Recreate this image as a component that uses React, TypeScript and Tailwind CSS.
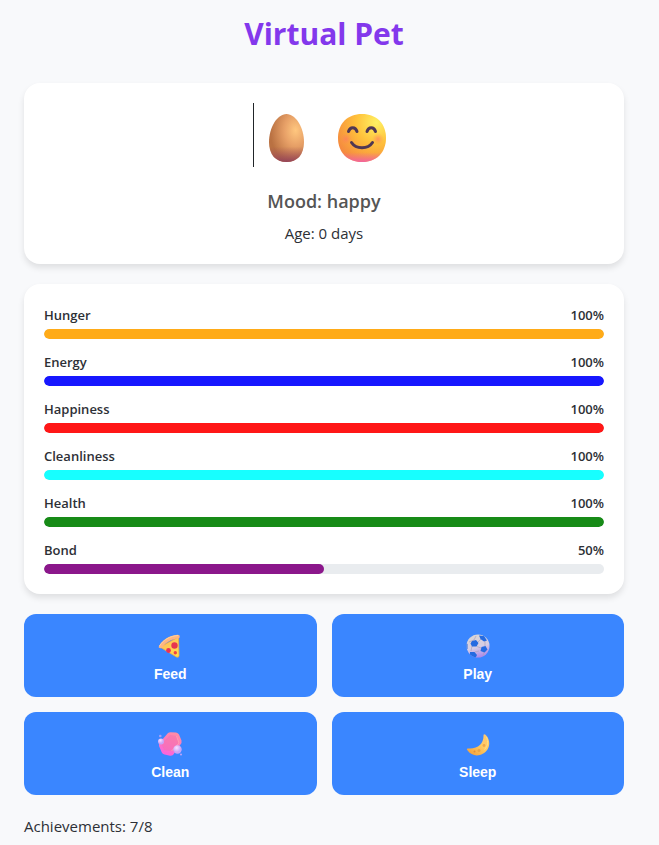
import type { ReactNode } from 'react';

const stats = [
  { name: 'Hunger', value: 100, color: 'bg-[#ffab18]' },
  { name: 'Energy', value: 100, color: 'bg-[#1717ff]' },
  { name: 'Happiness', value: 100, color: 'bg-[#ff1717]' },
  { name: 'Cleanliness', value: 100, color: 'bg-[#17ffff]' },
  { name: 'Health', value: 100, color: 'bg-[#178b17]' },
  { name: 'Bond', value: 50, color: 'bg-[#8b178b]' },
];

function Egg() {
  return (
    <svg viewBox="0 0 36 48" className="h-12 w-9" aria-label="Egg" role="img">
      <defs>
        <radialGradient id="eggBase" cx="0.76" cy="0.34" r="0.72">
          <stop offset="0" stopColor="#ffc77f" />
          <stop offset="0.45" stopColor="#e7a067" />
          <stop offset="1" stopColor="#b97142" />
        </radialGradient>
        <linearGradient id="eggShade" x1="0" y1="0" x2="0" y2="1">
          <stop offset="0.68" stopColor="#a24c55" stopOpacity="0" />
          <stop offset="1" stopColor="#91405c" stopOpacity="0.9" />
        </linearGradient>
      </defs>
      <path d="M17.500 0C27 0 35 14 35 28C35 41 28 48 17.500 48S0 41 0 28C0 14 8 0 17.500 0Z" fill="url(#eggBase)" />
      <path d="M17.500 0C27 0 35 14 35 28C35 41 28 48 17.500 48S0 41 0 28C0 14 8 0 17.500 0Z" fill="url(#eggShade)" />
    </svg>
  );
}

function Smile() {
  return (
    <svg viewBox="0 0 48 48" className="size-12" aria-label="Happy face" role="img">
      <defs>
        <radialGradient id="faceBase" cx="0.8" cy="0.18" r="0.95">
          <stop offset="0" stopColor="#fff163" />
          <stop offset="0.45" stopColor="#ffc13b" />
          <stop offset="1" stopColor="#f4863f" />
        </radialGradient>
        <linearGradient id="faceShade" x1="0" y1="0" x2="0" y2="1">
          <stop offset="0.8" stopColor="#f263a0" stopOpacity="0" />
          <stop offset="1" stopColor="#f260a8" stopOpacity="0.9" />
        </linearGradient>
        <radialGradient id="cheek">
          <stop offset="0" stopColor="#ff7369" stopOpacity="0.6" />
          <stop offset="1" stopColor="#ff8a55" stopOpacity="0" />
        </radialGradient>
      </defs>
      <path d="M24 0C38.500 0 48 9.500 48 24S38.500 48 24 48S0 38.500 0 24S9.500 0 24 0Z" fill="url(#faceBase)" />
      <path d="M24 0C38.500 0 48 9.500 48 24S38.500 48 24 48S0 38.500 0 24S9.500 0 24 0Z" fill="url(#faceShade)" />
      <circle cx="8" cy="25" r="6" fill="url(#cheek)" />
      <circle cx="40" cy="25" r="6" fill="url(#cheek)" />
      <path d="M10.500 17.500C12 12.500 17.500 12.500 19 17.500M29 17.500C30.500 12.500 36 12.500 37.500 17.500M13.500 28.500C18 35.500 30 35.500 34.500 28.500" fill="none" stroke="#503753" strokeWidth="3" strokeLinecap="round" />
    </svg>
  );
}

function Pizza() {
  return (
    <svg viewBox="0 0 24 24" className="size-6" aria-hidden="true">
      <defs>
        <linearGradient id="cheese" x1="0" y1="0" x2="1" y2="1">
          <stop offset="0" stopColor="#ffb75d" />
          <stop offset="1" stopColor="#ffe04b" />
        </linearGradient>
      </defs>
      <path d="M2 13L20.500 3L21 21.500Q21 24 18.500 23Z" fill="url(#cheese)" stroke="#f5a945" strokeWidth="0.8" />
      <path d="M.8 12.500C4 6 11 1.500 19.500.7Q22 .5 21.800 3Q21.600 4.300 20 4.400C13 5 7.500 8.500 4.200 13.300Q3.300 14.500 1.700 14Q.2 13.500.8 12.500Z" fill="#ffb582" />
      <path d="M1.500 12C5 6 12 2 20 1.500" fill="none" stroke="#ffd39a" strokeWidth="1" />
      <circle cx="16.500" cy="11.500" r="3.200" fill="#e7364f" />
      <circle cx="10.500" cy="16.500" r="2.400" fill="#ed3156" />
      <circle cx="17.300" cy="18.700" r="1.700" fill="#ee4145" />
    </svg>
  );
}

function Ball() {
  return (
    <svg viewBox="0 0 24 24" className="size-6" aria-hidden="true">
      <defs>
        <linearGradient id="ballBase" x1="0.3" y1="0" x2="0.6" y2="1">
          <stop offset="0" stopColor="#d8d5d5" />
          <stop offset="0.55" stopColor="#d5cde5" />
          <stop offset="1" stopColor="#aa86ed" />
        </linearGradient>
        <clipPath id="ballClip"><circle cx="12" cy="12" r="11.500" /></clipPath>
      </defs>
      <circle cx="12" cy="12" r="11.500" fill="url(#ballBase)" />
      <g clipPath="url(#ballClip)">
        <path d="M10 2L8 6M8 6L3 8M12 8L15 5M11 12.500L15 14M6 12L5 17M9 18L13 17M18 18L17 22M19 7L19 12" stroke="#aaa2bb" strokeWidth="0.7" />
        <path d="M6 7L10 6L12.500 9L10.500 12.500L6 12.500L4.500 9.500ZM13 1.500L18 2L21 6.500L18 7.500L14.500 5ZM15.500 13L19.500 12L21.500 15.500L18.500 18.500L14.500 17ZM4 18L8.500 18L11 21L9.500 24L4 22ZM0 9L1.500 10L1.500 15H0Z" fill="#256be1" />
      </g>
    </svg>
  );
}

function Soap() {
  return (
    <svg viewBox="0 0 26 24" className="h-6 w-[26px]" aria-hidden="true">
      <defs>
        <linearGradient id="soapBase" x1="0.7" y1="0" x2="0.3" y2="1">
          <stop offset="0" stopColor="#ff8da4" />
          <stop offset="1" stopColor="#fa62df" />
        </linearGradient>
        <radialGradient id="bubble" cx="0.4" cy="0.3">
          <stop offset="0" stopColor="#fbdfff" />
          <stop offset="1" stopColor="#c7a4f8" />
        </radialGradient>
      </defs>
      <path d="M11 1Q12 .2 13.500.2L19 .5Q21 .8 22 2.500L24.500 8.500Q25 11 23.500 12.500L16 23Q15 24 13 23.800L7.500 22.500Q5.500 22 4.800 20.500L2 14Q1.500 12 2.800 10.500Z" fill="url(#soapBase)" />
      <path d="M13 3L19.500 4L22 11L14.500 19L7 18L4.500 12Z" fill="#f36fa9" opacity="0.5" />
      <path d="M19.500 4L22 11L14.500 19" fill="none" stroke="#ff9bb2" strokeWidth="1" />
      <circle cx="20.500" cy="17.500" r="4.200" fill="url(#bubble)" />
      <circle cx="4" cy="9.500" r="3" fill="url(#bubble)" />
      <circle cx="3.300" cy="4" r="1.300" fill="#a6a0fa" />
      <circle cx="24" cy="22.500" r="1" fill="#c1a4fa" />
    </svg>
  );
}

function Moon() {
  return (
    <svg viewBox="0 0 24 24" className="size-6" aria-hidden="true">
      <defs>
        <linearGradient id="moonBase" x1="1" y1="0" x2="0.2" y2="1">
          <stop offset="0" stopColor="#ffc773" />
          <stop offset="0.5" stopColor="#ffcb62" />
          <stop offset="1" stopColor="#f5a23d" />
        </linearGradient>
      </defs>
      <path d="M17.500 2.800Q18.500 1.800 19.500 2.700C23.500 6.500 24.500 12.500 21.500 17.500C17 24.500 6.500 26 1.200 18Q.3 16.300 2 16.400C12 17.200 18 12 17.500 2.800Z" fill="url(#moonBase)" />
      <path d="M20.500 5C22.500 10 21.800 14 18.500 17.500" fill="none" stroke="#ffe184" strokeWidth="1" />
      <circle cx="18" cy="13.500" r="1.400" fill="#efa84c" />
      <circle cx="13" cy="18.500" r="1.500" fill="#eca345" />
      <circle cx="8.500" cy="19.500" r="1" fill="#e58b39" />
    </svg>
  );
}

function Card({ children }: { children: ReactNode }) {
  return <section className="rounded-2xl bg-white p-5 shadow-[0_4px_6px_rgba(0,0,0,0.1)]">{children}</section>;
}

const actions = [
  { label: 'Feed', icon: <Pizza /> },
  { label: 'Play', icon: <Ball /> },
  { label: 'Clean', icon: <Soap /> },
  { label: 'Sleep', icon: <Moon /> },
];

export default function App() {
  return (
    <div className="min-h-screen bg-[#f8f9fb] pl-6 pr-[35px] font-['Segoe_UI','Open_Sans','Noto_Sans',sans-serif] text-[15px] text-[#2d3036]">
      <main className="mx-auto flex max-w-[600px] flex-col gap-5">
        <h1 className="pt-3 pb-[7px] text-center text-3xl leading-11 font-bold text-[#8338ec]">Virtual Pet</h1>
        <Card>
          <div className="flex flex-col items-center">
            <div className="flex h-16 items-center gap-[33px] border-l border-[#212529] pt-1.5 pr-[9px] pl-[15px]">
              <Egg />
              <Smile />
            </div>
            <p className="mt-5 text-lg leading-7 font-semibold text-[#555555]">Mood: happy</p>
            <p className="mt-2 leading-[21px]">Age: 0 days</p>
          </div>
        </Card>
        <Card>
          <div className="flex flex-col gap-3">
            {stats.map((s) => (
              <div key={s.name}>
                <div className="mb-1 flex items-center justify-between pt-px text-[13px] leading-5 font-semibold">
                  <span>{s.name}</span>
                  <span>{s.value}%</span>
                </div>
                <div
                  role="progressbar"
                  aria-label={s.name}
                  aria-valuenow={s.value}
                  aria-valuemin={0}
                  aria-valuemax={100}
                  className="h-2.5 overflow-hidden rounded-full bg-[#e9ecef]"
                >
                  <div className={`h-full rounded-full ${s.color}`} style={{ width: `${s.value}%` }} />
                </div>
              </div>
            ))}
          </div>
        </Card>
        <div className="grid grid-cols-2 gap-[15px]">
          {actions.map((a) => (
            <button
              key={a.label}
              type="button"
              className="flex flex-col items-center gap-1.5 rounded-xl bg-[#3a86ff] pt-5 pb-[13px] font-['Liberation_Sans',Arial,sans-serif] text-sm leading-5 font-bold text-white"
            >
              {a.icon}
              {a.label}
            </button>
          ))}
        </div>
        <p className="leading-[22px]">Achievements: 7/8</p>
      </main>
    </div>
  );
}
